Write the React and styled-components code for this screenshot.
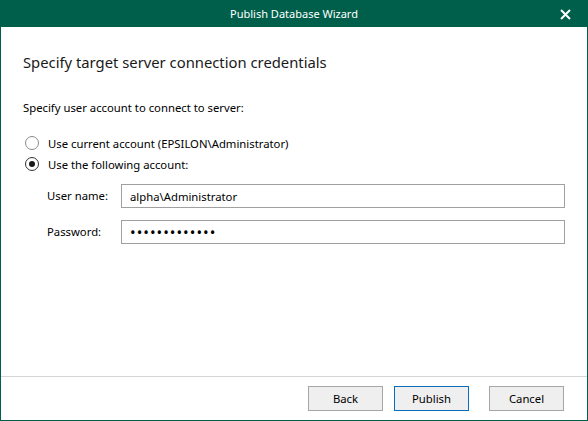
import React, { useState } from "react";
import styled, { createGlobalStyle } from "styled-components";

const GlobalStyle = createGlobalStyle`
  html, body {
    margin: 0;
    padding: 0;
    background: #ffffff;
  }
  body {
    font-family: "Noto Sans", "Liberation Sans", sans-serif;
    font-size: 11.3px;
    color: #000;
  }
`;

const Window = styled.div`
  width: 588px;
  height: 421px;
  box-sizing: border-box;
  border: 1px solid #005f4b;
  border-top: none;
  display: flex;
  flex-direction: column;
  background: #fff;
`;

const TitleBar = styled.div`
  height: 27px;
  margin: 0 -1px;
  background: #005f4b;
  color: #fff;
  display: flex;
  align-items: center;
  justify-content: center;
  position: relative;
  font-size: 11px;
`;

const CloseButton = styled.button`
  position: absolute;
  right: 17px;
  top: 8px;
  width: 12px;
  height: 12px;
  padding: 0;
  border: none;
  background: transparent;
  display: flex;
  align-items: center;
  justify-content: center;
  cursor: pointer;
`;

const Body = styled.div`
  flex: 1;
  padding: 25px 22px 0 22px;
  display: flex;
  flex-direction: column;
`;

const Heading = styled.h1`
  margin: 0;
  font-size: 14.8px;
  font-weight: 400;
  color: #1a1a1a;
  line-height: 20px;
`;

const Prompt = styled.div`
  margin-top: 28px;
  line-height: 16px;
`;

const RadioGroup = styled.div`
  margin-top: 19px;
  display: flex;
  flex-direction: column;
  gap: 5px;
`;

const RadioRow = styled.label`
  display: flex;
  align-items: center;
  gap: 9px;
  height: 16px;
  padding-left: 2px;
  cursor: pointer;
`;

const RadioCircle = styled.span`
  width: 12px;
  height: 12px;
  border-radius: 50%;
  border: 1px solid ${(p) => (p.$checked ? "#333" : "#8a8a8a")};
  display: flex;
  align-items: center;
  justify-content: center;
  flex-shrink: 0;

  &::after {
    content: "";
    width: 6px;
    height: 6px;
    border-radius: 50%;
    background: ${(p) => (p.$checked ? "#1a1a1a" : "transparent")};
  }
`;

const Fields = styled.div`
  margin-top: 12px;
  padding-left: 24px;
  display: grid;
  grid-template-columns: 74px 1fr;
  row-gap: 12px;
  align-items: center;
`;

const FieldLabel = styled.span`
  line-height: 24px;
`;

const Input = styled.input`
  box-sizing: border-box;
  height: 24px;
  width: 100%;
  border: 1px solid #a0a0a0;
  padding: 0 8px;
  font-family: "Noto Sans", "Liberation Sans", sans-serif;
  font-size: ${(p) => (p.type === "password" ? "15px" : "11.3px")};
  color: #000;
  outline: none;
  letter-spacing: ${(p) => (p.type === "password" ? "1px" : "normal")};
`;

const Footer = styled.div`
  height: 42px;
  border-top: 1px solid #d5d5d5;
  display: flex;
  justify-content: flex-end;
  align-items: center;
  padding: 0 23px 1px 0;
  gap: 11px;
`;

const Button = styled.button`
  box-sizing: border-box;
  width: 75px;
  height: 25px;
  background: #efefef;
  border: 1px solid ${(p) => (p.$primary ? "#0a6ebd" : "#a6a6a6")};
  font-family: "Noto Sans", "Liberation Sans", sans-serif;
  font-size: 11.3px;
  color: #000;
  padding: 0;
  margin-left: ${(p) => (p.$spaced ? "9px" : "0")};
`;

export default function App() {
  const [mode, setMode] = useState("other");

  return (
    <>
      <GlobalStyle />
      <Window>
        <TitleBar>
          Publish Database Wizard
          <CloseButton aria-label="Close">
            <svg width="11" height="11" viewBox="0 0 11 11">
              <path d="M1 1L10 10M10 1L1 10" stroke="#fff" strokeWidth="2" />
            </svg>
          </CloseButton>
        </TitleBar>
        <Body>
          <Heading>Specify target server connection credentials</Heading>
          <Prompt>Specify user account to connect to server:</Prompt>
          <RadioGroup>
            <RadioRow onClick={() => setMode("current")}>
              <RadioCircle $checked={mode === "current"} />
              Use current account (EPSILON\Administrator)
            </RadioRow>
            <RadioRow onClick={() => setMode("other")}>
              <RadioCircle $checked={mode === "other"} />
              Use the following account:
            </RadioRow>
          </RadioGroup>
          <Fields>
            <FieldLabel>User name:</FieldLabel>
            <Input defaultValue="alpha\Administrator" />
            <FieldLabel>Password:</FieldLabel>
            <Input type="password" defaultValue="passwordpass1" />
          </Fields>
        </Body>
        <Footer>
          <Button>Back</Button>
          <Button $primary>Publish</Button>
          <Button $spaced>Cancel</Button>
        </Footer>
      </Window>
    </>
  );
}
